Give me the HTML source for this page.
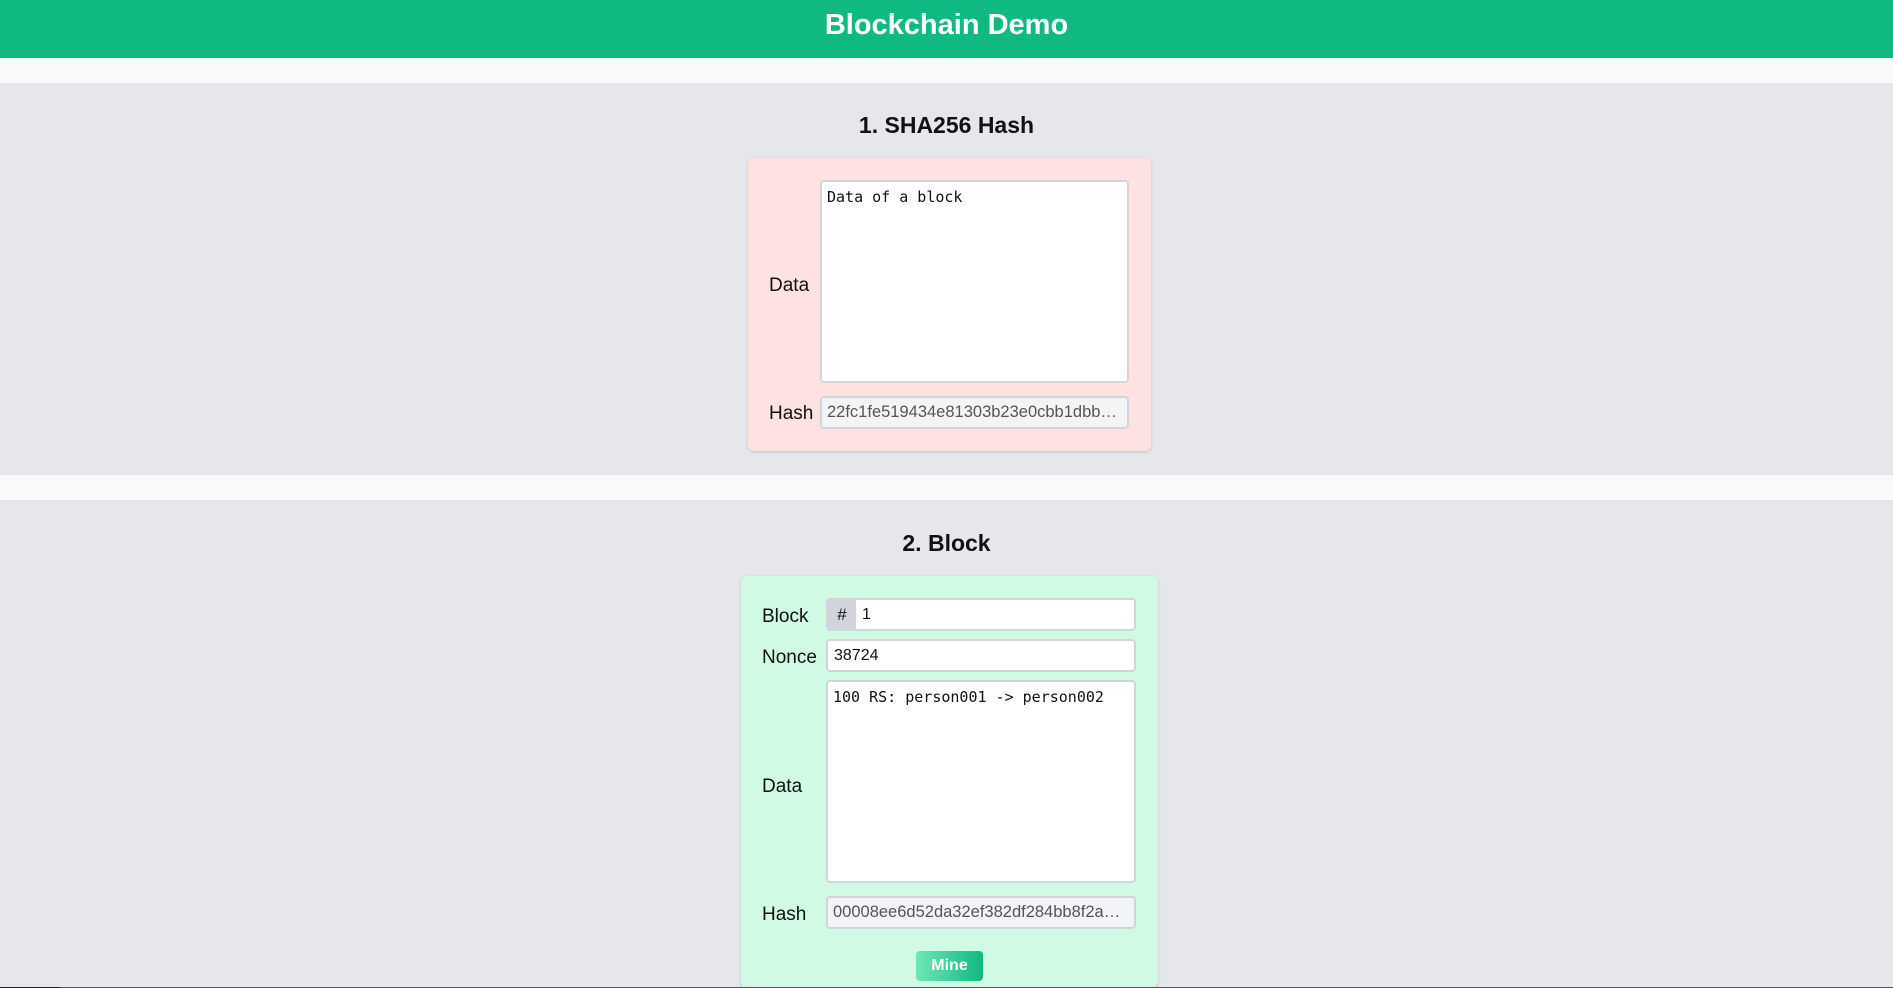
<!DOCTYPE html>
<html><head><meta charset="utf-8"><style>
*{box-sizing:border-box;margin:0;padding:0}
html,body{width:1893px;height:988px;overflow:hidden}
body{background:#e5e7eb;font-family:"Liberation Sans",sans-serif;position:relative}
.abs{position:absolute}
.hdr{left:0;top:0;width:1893px;height:58px;background:#10b981;color:#fff;font-weight:bold;font-size:29px;text-align:center;line-height:50px}
.strip{left:0;width:1893px;height:25px;background:#f8f9fa}
h2{position:absolute;left:0;width:1893px;text-align:center;font-size:23px;font-weight:bold;color:#111}
.card{border-radius:6px;box-shadow:0 1px 3px rgba(0,0,0,.15)}
.lbl{font-size:19px;color:#111}
.box{background:#fff;border:2px solid #d1d5db;border-radius:4px}
.mono{font-family:"DejaVu Sans Mono","Liberation Mono",monospace;font-size:15px;color:#111;padding:6px 5px}
.hash{background:#f3f4f6;border:2px solid #d1d5db;border-radius:4px;color:#555;font-size:16.5px;padding:0 5px;line-height:29px;white-space:nowrap;overflow:hidden}
.inp{font-size:16px;color:#111;padding:0 6px;line-height:29px}
</style></head><body>
<div class="abs hdr">Blockchain Demo</div>
<div class="abs strip" style="top:58px"></div>
<h2 style="top:112px">1. SHA256 Hash</h2>
<div class="abs card" style="left:748px;top:158px;width:403px;height:293px;background:#fee2e2"></div>
<div class="abs lbl" style="left:769px;top:275px">Data</div>
<div class="abs box mono" style="left:820px;top:180px;width:309px;height:203px">Data of a block</div>
<div class="abs lbl" style="left:769px;top:403px">Hash</div>
<div class="abs hash" style="left:820px;top:396px;width:309px;height:33px">22fc1fe519434e81303b23e0cbb1dbb…</div>
<div class="abs strip" style="top:475px"></div>
<h2 style="top:530px">2. Block</h2>
<div class="abs card" style="left:741px;top:576px;width:417px;height:411px;background:#d1fae5"></div>
<div class="abs lbl" style="left:762px;top:606px">Block</div>
<div class="abs box" style="left:826px;top:598px;width:310px;height:33px;overflow:hidden">
 <div class="abs" style="left:0;top:0;width:28px;height:29px;background:#d1d5db;font-size:17px;line-height:29px;text-align:center;color:#111">#</div>
 <div class="abs inp" style="left:28px;top:0">1</div>
</div>
<div class="abs lbl" style="left:762px;top:647px">Nonce</div>
<div class="abs box inp" style="left:826px;top:639px;width:310px;height:33px">38724</div>
<div class="abs lbl" style="left:762px;top:776px">Data</div>
<div class="abs box mono" style="left:826px;top:680px;width:310px;height:203px">100 RS: person001 -&gt; person002</div>
<div class="abs lbl" style="left:762px;top:904px">Hash</div>
<div class="abs hash" style="left:826px;top:896px;width:310px;height:33px">00008ee6d52da32ef382df284bb8f2a…</div>
<div class="abs" style="left:916px;top:951px;width:67px;height:30px;border-radius:4px;background:linear-gradient(90deg,#6ee7b7,#10b981);color:#fff;font-weight:bold;font-size:16px;text-align:center;line-height:30px">Mine</div>
<div class="abs" style="left:0;top:987px;width:1893px;height:1px;background:#555"></div>
<div class="abs" style="left:0;top:987px;width:60px;height:1px;background:#222"></div>
</body></html>
